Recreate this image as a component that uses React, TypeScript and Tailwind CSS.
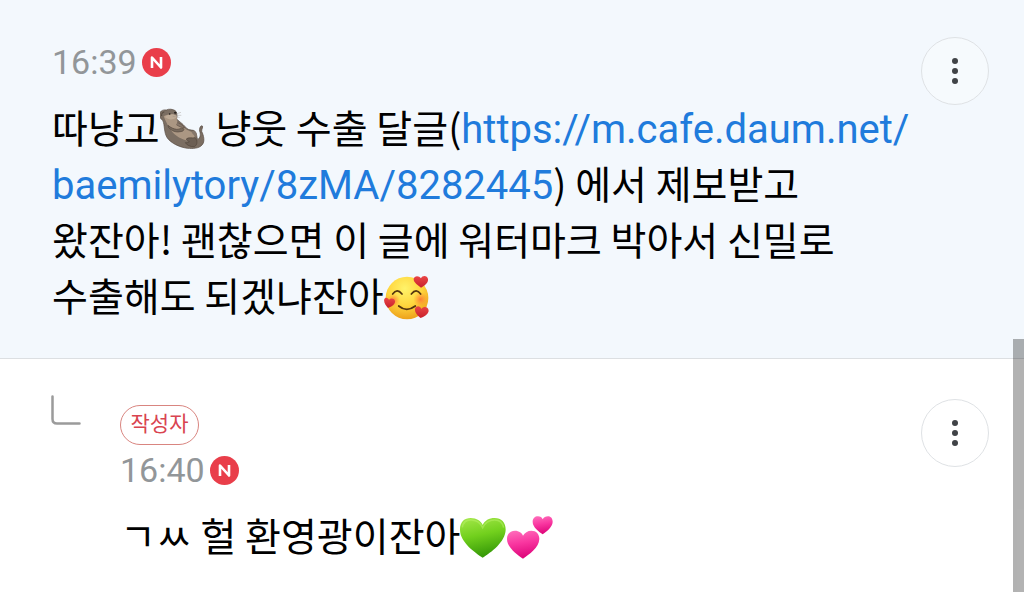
import type { ReactNode } from "react";

function Otter() {
  return (
    <svg className="inline-block size-[47px] align-[-11px]" viewBox="30 22 141 141" role="img" aria-label="otter">
      <path d="M27 48C25 36 35 29 47 31C54 27 66 28 74 33C79 39 80 49 78 57C82 64 93 68 108 86C116 94 128 88 134 96C139 103 138 113 141 120C150 114 150 103 147 95C145 86 150 76 155 79C158 82 153 87 153 95C159 107 164 126 154 136C145 147 126 147 110 146C85 142 62 131 50 115C39 99 43 77 36 62C30 58 28 54 27 48Z" fill="#7b6e62" stroke="#54493f" strokeWidth="2" transform="translate(2 0)" />
      <g transform="translate(2 0)">
        <path d="M39 50C48 43 64 43 77 47C81 53 76 61 81 68C91 78 102 90 118 95C130 98 136 114 130 122C111 128 84 116 67 99C53 84 47 68 39 50Z" fill="#ab9783" />
        <path d="M42 52C51 59 60 61 69 58C75 57 78 53 79 49C69 41 54 42 42 52Z" fill="#bdaa96" />
        <path d="M52 77C60 84 69 88 78 89C84 90 90 84 99 87C102 91 96 96 88 96C77 99 63 94 54 84Z" fill="#786a5d" stroke="#54483e" strokeWidth="2" />
        <path d="M79 69C86 69 96 77 102 83C95 86 85 80 77 75" fill="#85766a" stroke="#605247" strokeWidth="2" />
        <path d="M107 118C112 112 124 116 133 114C141 121 141 136 131 141C119 142 108 136 104 129C109 129 114 129 116 126C112 124 108 122 107 118Z" fill="#6c5f54" stroke="#51453b" strokeWidth="2" />
        <path d="M126 93C136 94 140 101 138 112C132 110 128 104 123 99Z" fill="#85776b" />
        <path d="M33 49C32 42 35 37 41 37" fill="none" stroke="#51463c" strokeWidth="3" />
        <circle cx="57" cy="43" r="2.500" fill="#1d1916" />
        <ellipse cx="74" cy="39" rx="4" ry="3" fill="#27211e" />
        <path d="M66 50Q72 53 78 47M76 43L91 38M77 47L92 47M76 50L87 54" fill="none" stroke="#8c8278" strokeWidth="1" />
      </g>
    </svg>
  );
}

function SmilingHearts() {
  return (
    <svg className="inline-block size-[47px] align-[-11px]" viewBox="37 26 141 141" role="img" aria-label="smiling face with hearts">
      <defs>
        <radialGradient id="face" cx="45%" cy="28%" r="72%">
          <stop offset="0" stopColor="#fff36a" />
          <stop offset="0.55" stopColor="#ffd63e" />
          <stop offset="1" stopColor="#eda11b" />
        </radialGradient>
        <radialGradient id="blush">
          <stop offset="0" stopColor="#ff6b35" stopOpacity="0.8" />
          <stop offset="1" stopColor="#ff8b35" stopOpacity="0" />
        </radialGradient>
        <linearGradient id="redHeart" x1="0" y1="0" x2="0" y2="1">
          <stop offset="0" stopColor="#ea4646" />
          <stop offset="1" stopColor="#c8202b" />
        </linearGradient>
      </defs>
      <circle cx="106" cy="95" r="64" fill="url(#face)" />
      <circle cx="65" cy="102" r="20" fill="url(#blush)" />
      <circle cx="147" cy="99" r="22" fill="url(#blush)" />
      <path d="M63 83Q76 64 91 83M119 83Q134 64 147 83" fill="none" stroke="#54350f" strokeWidth="5" strokeLinecap="round" />
      <path d="M81 119Q105 139 131 119" fill="none" stroke="#54350f" strokeWidth="5" strokeLinecap="round" />
      <path d="M148 64C139 57 125 48 126 38C128 27 142 27 148 36C152 26 167 27 169 38C171 49 158 59 148 64Z" fill="url(#redHeart)" />
      <path d="M49 125C42 117 35 107 38 98C42 91 50 94 52 101C58 93 71 97 70 107C69 116 57 122 49 125Z" fill="url(#redHeart)" />
      <path d="M147 155C139 149 128 138 130 127C134 116 146 118 149 128C157 118 171 122 171 134C169 145 156 152 147 155Z" fill="url(#redHeart)" />
    </svg>
  );
}

function GreenHeart() {
  return (
    <svg className="inline-block size-[47px] align-[-11px]" viewBox="30 29 141 141" role="img" aria-label="green heart">
      <defs>
        <linearGradient id="green" x1="0" y1="0" x2="0.25" y2="1">
          <stop offset="0" stopColor="#a5e84a" />
          <stop offset="0.5" stopColor="#72d01d" />
          <stop offset="1" stopColor="#399c09" />
        </linearGradient>
      </defs>
      <path d="M98 157C76 142 30 111 30 73C30 49 44 38 62 38C80 38 93 47 98 59C104 46 117 38 134 38C154 38 167 51 167 73C166 110 123 141 98 157Z" fill="url(#green)" />
      <path d="M37 66C40 48 52 43 65 44C80 45 92 54 98 67C106 51 119 44 134 44C149 44 158 53 161 67" fill="none" stroke="#baf26a" strokeWidth="5" opacity="0.5" />
    </svg>
  );
}

function TwoHearts() {
  return (
    <svg className="inline-block size-[47px] align-[-11px]" viewBox="171 29 141 141" role="img" aria-label="two hearts">
      <defs>
        <linearGradient id="pink" x1="0" y1="0" x2="0.2" y2="1">
          <stop offset="0" stopColor="#ff72bd" />
          <stop offset="0.5" stopColor="#f936a0" />
          <stop offset="1" stopColor="#df087c" />
        </linearGradient>
      </defs>
      <path d="M219 160C202 148 171 127 171 101C171 84 182 76 195 76C207 76 216 83 219 91C224 82 233 76 244 76C259 76 268 86 268 101C267 127 237 148 219 160Z" fill="url(#pink)" />
      <path d="M278 87C268 80 248 66 248 50C248 39 255 33 264 33C271 33 276 37 278 42C281 37 287 33 294 33C303 33 308 40 308 50C307 66 289 79 278 87Z" fill="url(#pink)" />
    </svg>
  );
}

function NewBadge() {
  return (
    <svg className="size-[29px]" viewBox="0 0 29 29" role="img" aria-label="new">
      <circle cx="14.5" cy="14.5" r="14.5" fill="#e93e4a" />
      <path d="M10 20V9.500L19 19.500V9" fill="none" stroke="#fff" strokeWidth="2.600" strokeLinejoin="round" />
    </svg>
  );
}

function Time({ value }: { value: string }) {
  return (
    <div className="flex h-10 items-center gap-[5px] text-[34px] text-[#929699]">
      <time>{value}</time>
      <NewBadge />
    </div>
  );
}

function MoreButton() {
  return (
    <button type="button" aria-label="More" className="flex size-[68px] shrink-0 items-center justify-center rounded-full border border-[#dfe2e5] bg-white/25">
      <svg className="h-7 w-2 text-[#404347]" viewBox="0 0 8 28" fill="currentColor">
        <circle cx="4" cy="4" r="3" />
        <circle cx="4" cy="14" r="3" />
        <circle cx="4" cy="24" r="3" />
      </svg>
    </button>
  );
}

function CommentText({ children }: { children: ReactNode }) {
  return (
    <p className="mt-4 font-['Noto_Sans_CJK_KR',sans-serif] text-[39px] leading-[56px] whitespace-nowrap text-black">
      {children}
    </p>
  );
}

export default function App() {
  return (
    <main className="relative min-h-screen bg-white font-['Roboto','Noto_Sans_CJK_KR',sans-serif]">
      <article className="flex items-start border-b border-[#dcdfe2] bg-[#f3f8fd] pt-[37px] pr-[35px] pb-9 pl-[52px]">
        <div className="min-w-0 flex-1 pt-[5px]">
          <Time value="16:39" />
          <CommentText>
            따냥고<Otter /> 냥웃 수출 달글(
            <a href="https://m.cafe.daum.net/baemilytory/8zMA/8282445" className="font-['Roboto',sans-serif] text-[40px] leading-10 text-[#207bdc]">
              https://m.cafe.daum.net/
              <br />
              baemilytory/8zMA/8282445
            </a>
            ) 에서 제보받고
            <br />
            왔잔아! 괜찮으면 이 글에 워터마크 박아서 신밀로
            <br />
            수출해도 되겠냐잔아
            <SmilingHearts />
          </CommentText>
        </div>
        <MoreButton />
      </article>

      <article className="flex items-start pt-10 pr-[35px] pb-7 pl-[51px]">
        <svg className="-mt-1 mr-[39px] h-[30px] w-[30px] shrink-0" viewBox="0 0 30 30" fill="none" stroke="#9b9b9b" strokeWidth="2.500" strokeLinecap="round">
          <path d="M1.500 1.500V24Q1.500 28.500 6 28.500H28.500" />
        </svg>
        <div className="min-w-0 flex-1 pt-1.5">
          <span className="flex h-10 w-[79px] items-center justify-center rounded-full border border-[#d98580] text-[21px] text-[#d94450]">작성자</span>
          <div className="mt-[5px]">
            <Time value="16:40" />
          </div>
          <CommentText>
            ㄱㅆ 헐 환영광이잔아
            <GreenHeart />
            <TwoHearts />
          </CommentText>
        </div>
        <MoreButton />
      </article>

      {/* scroll thumb floats over the comments */}
      <div className="absolute top-[339px] right-0 bottom-0 w-[11px] bg-black/30" />
    </main>
  );
}
